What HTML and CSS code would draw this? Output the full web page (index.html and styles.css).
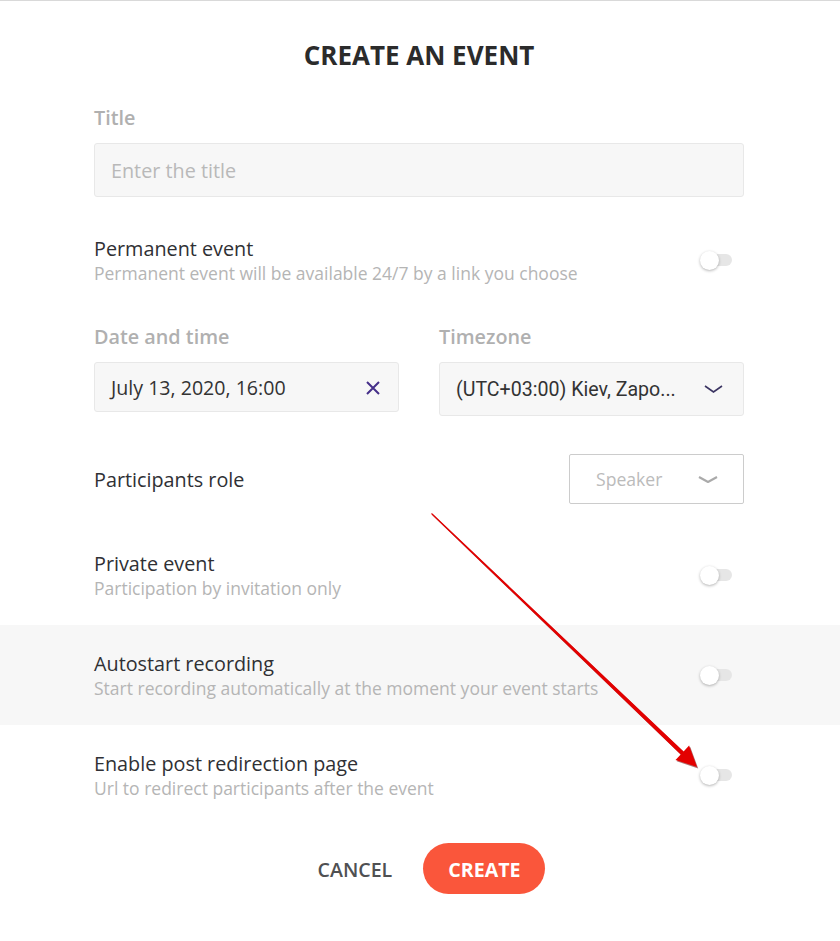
FILE: index.html
```html
<!DOCTYPE html>
<html lang="en">
<head>
  <meta charset="UTF-8">
  <meta name="viewport" content="width=device-width, initial-scale=1.0">
  <title>Create an event</title>
  <link rel="stylesheet" href="styles.css">
</head>
<body>
  <main class="form">
    <h1 class="wrap form-title">CREATE AN EVENT</h1>

    <div class="wrap field field-title">
      <label class="field-label" for="title">Title</label>
      <input class="text-input" id="title" type="text" placeholder="Enter the title">
    </div>

    <div class="switch-row row-permanent">
      <div class="wrap switch-inner">
        <div class="switch-text">
          <div class="switch-name">Permanent event</div>
          <div class="switch-hint">Permanent event will be available 24/7 by a link you choose</div>
        </div>
        <span class="switch"></span>
      </div>
    </div>

    <div class="wrap two-cols">
      <div class="field">
        <div class="field-label">Date and time</div>
        <div class="box box-date">
          <span>July 13, 2020, 16:00</span>
          <svg class="icon-clear" width="14" height="14" viewBox="0 0 14 14">
            <path d="M1 1 L13 13 M13 1 L1 13" stroke="#46308a" stroke-width="2" fill="none"/>
          </svg>
        </div>
      </div>
      <div class="field">
        <div class="field-label">Timezone</div>
        <div class="box box-zone">
          <span>(UTC+03:00) Kiev, Zapo...</span>
          <svg class="icon-chevron" width="19" height="8" viewBox="0 0 19 8">
            <path d="M1 1 L9.5 7 L18 1" stroke="#3b3462" stroke-width="1.6" fill="none"/>
          </svg>
        </div>
      </div>
    </div>

    <div class="wrap role-row">
      <div class="switch-name role-name">Participants role</div>
      <div class="role-select">
        <span>Speaker</span>
        <svg width="20" height="7" viewBox="0 0 20 7">
          <path d="M1 1 L10 6 L19 1" stroke="#aaaaaa" stroke-width="2.2" fill="none"/>
        </svg>
      </div>
    </div>

    <div class="switch-row row-private">
      <div class="wrap switch-inner">
        <div class="switch-text">
          <div class="switch-name">Private event</div>
          <div class="switch-hint">Participation by invitation only</div>
        </div>
        <span class="switch"></span>
      </div>
    </div>

    <div class="switch-row row-shaded">
      <div class="wrap switch-inner">
        <div class="switch-text">
          <div class="switch-name">Autostart recording</div>
          <div class="switch-hint">Start recording automatically at the moment your event starts</div>
        </div>
        <span class="switch"></span>
      </div>
    </div>

    <div class="switch-row">
      <div class="wrap switch-inner">
        <div class="switch-text">
          <div class="switch-name">Enable post redirection page</div>
          <div class="switch-hint">Url to redirect participants after the event</div>
        </div>
        <span class="switch"></span>
      </div>
    </div>

    <div class="wrap actions">
      <button class="btn btn-cancel">CANCEL</button>
      <button class="btn btn-create">CREATE</button>
    </div>
  </main>

  <!-- annotation arrow drawn over the form -->
  <svg class="annotation" width="840" height="941" viewBox="0 0 840 941">
    <polygon transform="translate(1.2 1.4)" fill="#6d0000" opacity="0.55"
      points="431.9,513.1 683.6,751.4 689.1,745.6 697,767 675.5,759.9 680.7,754.4 431.1,513.9"/>
    <polygon fill="#e30000"
      points="431.9,513.1 683.6,751.4 689.1,745.6 697,767 675.5,759.9 680.7,754.4 431.1,513.9"/>
  </svg>
</body>
</html>
```

FILE: styles.css
```css
body {
  margin: 0;
  border-top: 1px solid #d9d9d9;
  background-color: #fff;
  font-family: 'Open Sans', 'Noto Sans', sans-serif;
  color: #303030;
  position: relative;
}

.wrap {
  width: 650px;
  margin-left: 94px;
  margin-right: 96px;
}

.form-title {
  margin-top: 36px;
  margin-bottom: 0;
  font-size: 26px;
  line-height: 36px;
  font-weight: 700;
  text-align: center;
  color: #2b2b2b;
}

.field-title {
  margin-top: 33px;
}

.field {
  display: flex;
  flex-direction: column;
}

.field-label {
  display: block;
  margin-bottom: 13px;
  font-size: 19.8px;
  line-height: 24px;
  font-weight: 600;
  color: #b0b0b0;
}

.text-input {
  box-sizing: border-box;
  height: 54px;
  width: 100%;
  padding: 1px 16px 0;
  border: 1px solid #e8e8e8;
  border-radius: 3px;
  background-color: #f7f7f7;
  font-family: 'Open Sans', sans-serif;
  font-size: 19.8px;
  color: #333;
  outline: none;
}

.text-input::placeholder {
  color: #b9b9b9;
}

/* rows with a switch on the right */
.switch-row {
  height: 100px;
}

.row-permanent {
  margin-top: 13px;
}

.row-private {
  margin-top: 21px;
}

.row-shaded {
  background-color: #f7f7f7;
}

.switch-inner {
  height: 100%;
  display: flex;
  align-items: center;
  justify-content: space-between;
}

.switch-text {
  padding-top: 2px;
}

.switch-name {
  font-size: 19.8px;
  line-height: 24px;
  color: #2f3034;
}

.role-name {
  padding-top: 2px;
}

.switch-hint {
  font-size: 17.5px;
  line-height: 24px;
  color: #b5b5b5;
}

.switch {
  position: relative;
  width: 32px;
  height: 19px;
  margin-right: 12px;
}

.switch::before {
  content: "";
  position: absolute;
  left: 4px;
  top: 3px;
  width: 28px;
  height: 12px;
  border-radius: 6px;
  background-color: #e6e6e6;
}

.switch::after {
  content: "";
  position: absolute;
  left: 0;
  top: 0;
  width: 19px;
  height: 19px;
  border-radius: 50%;
  background-color: #fff;
  box-shadow: 0 1px 3px rgba(0, 0, 0, 0.3);
}

/* date + timezone */
.two-cols {
  margin-top: 15px;
  display: grid;
  grid-template-columns: 305px 305px;
  column-gap: 40px;
  align-items: start;
}

.box {
  box-sizing: border-box;
  display: flex;
  align-items: center;
  justify-content: space-between;
  border: 1px solid #e8e8e8;
  border-radius: 3px;
  background-color: #f7f7f7;
  font-size: 19.6px;
  color: #333;
}

.box-date {
  height: 50px;
  padding: 0 18px 0 16px;
}

.box-zone {
  height: 54px;
  padding: 0 20px 0 16px;
  font-family: Roboto, 'Liberation Sans', sans-serif;
}

.icon-clear {
  margin-top: 2px;
}

/* participants role */
.role-row {
  margin-top: 38px;
  display: flex;
  align-items: center;
  justify-content: space-between;
}

.role-select {
  box-sizing: border-box;
  width: 175px;
  height: 50px;
  display: flex;
  align-items: center;
  justify-content: space-between;
  padding: 0 25px 0 26px;
  border: 1px solid #cccccc;
  border-radius: 2px;
  font-size: 17.6px;
  color: #bbbbbb;
}

/* buttons */
.actions {
  margin-top: 18px;
  display: flex;
  justify-content: center;
  gap: 6px;
}

.btn {
  height: 51px;
  padding: 2px 25px 0;
  border: none;
  border-radius: 26px;
  font-family: 'Open Sans', sans-serif;
  font-size: 19.6px;
  cursor: pointer;
}

.btn-cancel {
  background: none;
  color: #4f5052;
  font-weight: 600;
}

.btn-create {
  background-color: #fa563b;
  color: #fff;
  font-weight: 700;
}

.annotation {
  position: absolute;
  left: 0;
  top: -1px;
  pointer-events: none;
}
```
